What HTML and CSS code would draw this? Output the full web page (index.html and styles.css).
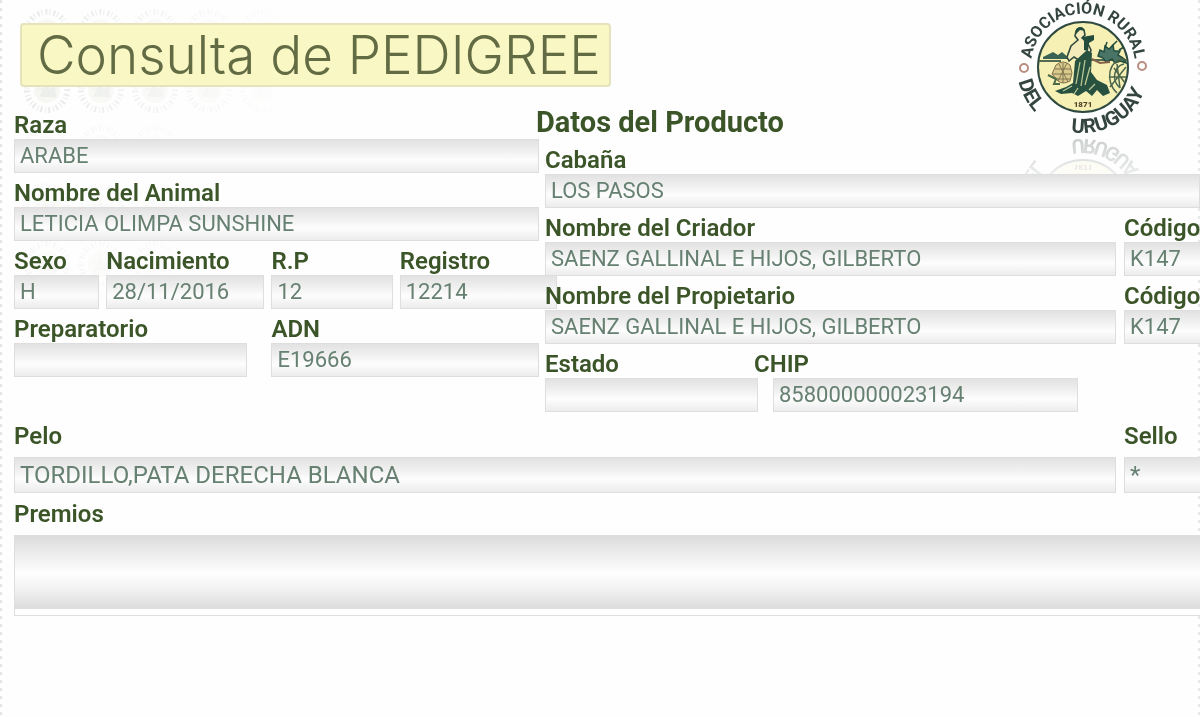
FILE: index.html
```
<!DOCTYPE html>
<html lang="es">
<head>
    <meta charset="UTF-8">
    <meta name="viewport" content="width=device-width, initial-scale=1.0">
    <title>Consulta de PEDIGREE</title>
    <link rel="stylesheet" href="styles.css">
</head>
<body>
    <svg class="watermark" viewBox="0 0 300 400" aria-hidden="true">
        <defs>
            <linearGradient id="fade">
                <stop offset="0" stop-color="#fff"/>
                <stop offset="1" stop-color="#fff" stop-opacity="0"/>
            </linearGradient>
            <mask id="fadeMask"><rect width="300" height="400" fill="url(#fade)"/></mask>
            <pattern id="seals" x="20" y="4" width="54" height="58" patternUnits="userSpaceOnUse">
                <circle cx="27" cy="28" r="20" fill="none" stroke="#cfd4cf" stroke-width="6" stroke-dasharray="1 3 2 2"/>
                <circle cx="27" cy="28" r="13" fill="#eef0e6"/>
                <path d="M20 34 l6 -12 3 6 5 -3 2 10z M17 27 h20" fill="#d5dad2" stroke="#d5dad2"/>
            </pattern>
        </defs>
        <g mask="url(#fadeMask)">
            <rect x="20" y="4" width="270" height="116" fill="url(#seals)"/>
            <rect x="20" y="120" width="162" height="174" fill="url(#seals)" opacity="0.4"/>
        </g>
    </svg>

    <header class="header">
        <h1 class="title">Consulta de PEDIGREE</h1>
        <svg class="logo" viewBox="0 0 140 174" role="img" aria-label="Asociación Rural del Uruguay">
            <defs>
                <path id="arcTop" d="M21 83 A52 52 0 1 1 119 83"/>
                <path id="arcBottom" d="M4 67 A66 66 0 0 0 136 67"/>
                <linearGradient id="reflFade" x1="0" y1="136" x2="0" y2="172" gradientUnits="userSpaceOnUse">
                    <stop offset="0" stop-color="#fff" stop-opacity="0.26"/>
                    <stop offset="1" stop-color="#fff" stop-opacity="0.1"/>
                </linearGradient>
                <mask id="reflMask"><rect y="136" width="140" height="38" fill="url(#reflFade)"/></mask>
                <g id="seal">
                    <text class="seal-top"><textPath href="#arcTop" startOffset="50%" text-anchor="middle">ASOCIACIÓN RURAL</textPath></text>
                    <text class="seal-bottom"><textPath href="#arcBottom" startOffset="7%">DEL</textPath></text>
                    <text class="seal-bottom"><textPath href="#arcBottom" startOffset="66%" text-anchor="middle">URUGUAY</textPath></text>
                    <g fill="none" stroke="#b98d80" stroke-width="2">
                        <circle cx="11" cy="68" r="4"/>
                        <circle cx="129" cy="66" r="4"/>
                    </g>
                    <circle cx="70" cy="67" r="45" fill="#f6f0b4" stroke="#2f4a40" stroke-width="2"/>
                    <path d="M26 61 H48 M78 60 H114" stroke="#536a50" stroke-width="2"/>
                    <path d="M30 57 l10 -5 5 3 4 -3 8 7 h-27z" fill="#3a6354"/>
                    <!-- seated figure -->
                    <path d="M63 31 q4 -6 8 -1 l1 5 -3 3 5 4 4 8 -3 10 -8 1 -6 -4 -5 4 -2 -4 4 -11 7 -6 -3 -4z" fill="#f3ebbb" stroke="#31493f" stroke-width="1.6"/>
                    <path d="M63 29 q6 -5 9 2 l-5 -1 -4 4z M69 37 l12 -2 0 5 -5 3 -1 8 -4 -1 0 -9z" fill="#234b3d"/>
                    <path d="M62 61 L74 50 79 53 78 72 84 80 94 85 97 93 90 96 84 90 79 96 73 91 65 96 59 93 48 94 42 91 53 87 60 83z" fill="#285140"/>
                    <path d="M67 62 L63 84 M72 60 L68 86 M77 67 L72 85 M82 84 L76 90 M59 86 L50 91 M65 88 L61 94" stroke="#b9c795" stroke-width="1.3"/>
                    <!-- basket -->
                    <path d="M43 65 q7 -6 14 0 l2 8 -2 8 q-7 4 -12 0 l-6 -7z" fill="#dacb8d" stroke="#826f4a"/>
                    <path d="M42 69 h16 M40 74 h18 M43 79 h14 M46 64 l9 18 M54 63 l-9 18 M50 63 v20" stroke="#7f7650" fill="none"/>
                    <path d="M35 75 l8 4 -2 5 6 0" stroke="#4b6847" stroke-width="2" fill="none"/>
                    <!-- bull -->
                    <path d="M85 56 l2 -6 4 2 1 -6 4 3 4 -4 1 6 6 0 -2 4 5 3 3 5 -6 -2 -5 2 -3 -4 -6 3 -3 -4z" fill="#4a7466" stroke="#234d3d" stroke-width="1.5"/>
                    <path d="M92 48 l2 -6 M99 46 l5 -5 M106 50 l5 -3" stroke="#234d3d" stroke-width="1.5"/>
                    <path d="M79 59 l8 4 10 -1" fill="none" stroke="#856348" stroke-width="2"/>
                    <!-- wheel -->
                    <g fill="none" stroke="#4d674d" stroke-width="1.5">
                        <path d="M112 59 C96 58 91 81 104 93"/>
                        <path d="M111 64 C102 66 97 79 107 88"/>
                        <path d="M97 77 h16 M101 68 l11 15 M104 64 l3 24 M97 87 l16 -20"/>
                    </g>
                    <text class="seal-year" x="70" y="107" text-anchor="middle">1871</text>
                </g>
            </defs>
            <use href="#seal"/>
            <g mask="url(#reflMask)"><use href="#seal" transform="translate(0 272) scale(1 -1)"/></g>
        </svg>
    </header>

    <form class="ficha">
        <div class="columns">
            <section class="animal">
                <div class="field full">
                    <label for="raza">Raza</label>
                    <input id="raza" type="text" value="ARABE" readonly>
                </div>
                <div class="field full">
                    <label for="nombre">Nombre del Animal</label>
                    <input id="nombre" type="text" value="LETICIA OLIMPA SUNSHINE" readonly>
                </div>
                <div class="field">
                    <label for="sexo">Sexo</label>
                    <input id="sexo" type="text" value="H" readonly>
                </div>
                <div class="field">
                    <label for="nacimiento">Nacimiento</label>
                    <input id="nacimiento" type="text" value="28/11/2016" readonly>
                </div>
                <div class="field">
                    <label for="rp">R.P</label>
                    <input id="rp" type="text" value="12" readonly>
                </div>
                <div class="field registro">
                    <label for="registro">Registro</label>
                    <input id="registro" type="text" value="12214" readonly>
                </div>
                <div class="field half preparatorio">
                    <label for="preparatorio">Preparatorio</label>
                    <input id="preparatorio" type="text" value="" readonly>
                </div>
                <div class="field half">
                    <label for="adn">ADN</label>
                    <input id="adn" type="text" value="E19666" readonly>
                </div>
            </section>

            <section class="producto">
                <h2>Datos del Producto</h2>
                <div class="field">
                    <label for="cabana">Cabaña</label>
                    <input id="cabana" type="text" value="LOS PASOS" readonly>
                </div>
                <div class="row">
                    <div class="field">
                        <label for="criador">Nombre del Criador</label>
                        <input id="criador" type="text" value="SAENZ GALLINAL E HIJOS, GILBERTO" readonly>
                    </div>
                    <div class="field codigo">
                        <label for="codCriador">Código</label>
                        <input id="codCriador" type="text" value="K147" readonly>
                    </div>
                </div>
                <div class="row">
                    <div class="field">
                        <label for="propietario">Nombre del Propietario</label>
                        <input id="propietario" type="text" value="SAENZ GALLINAL E HIJOS, GILBERTO" readonly>
                    </div>
                    <div class="field codigo">
                        <label for="codPropietario">Código</label>
                        <input id="codPropietario" type="text" value="K147" readonly>
                    </div>
                </div>
                <div class="row-chip">
                    <div class="field estado">
                        <label for="estado">Estado</label>
                        <input id="estado" type="text" value="" readonly>
                    </div>
                    <div class="field chip">
                        <label for="chip">CHIP</label>
                        <input id="chip" type="text" value="858000000023194" readonly>
                    </div>
                </div>
            </section>
        </div>

        <div class="row tall">
            <div class="field">
                <label for="pelo">Pelo</label>
                <input id="pelo" type="text" value="TORDILLO,PATA DERECHA BLANCA" readonly>
            </div>
            <div class="field codigo">
                <label for="sello">Sello</label>
                <input id="sello" type="text" value="*" readonly>
            </div>
        </div>
        <div class="field tall">
            <label for="premios">Premios</label>
            <textarea id="premios" readonly></textarea>
        </div>
    </form>
</body>
</html>
```
FILE: styles.css
```
:root {
    --label: #3b5528;
    --value: #668071;
    --border: #dedede;
    --cream: #f9f8c5;
}

* {
    margin: 0;
    padding: 0;
    box-sizing: border-box;
}

body {
    position: relative;
    min-height: 100vh;
    overflow-x: hidden;
    background-color: #fefefe;
    /* perforated edges */
    background-image:
        repeating-linear-gradient(#e4e4e4 0 3px, transparent 3px 8px),
        repeating-linear-gradient(#e8e8e8 0 3px, transparent 3px 8px);
    background-size: 2px 100%;
    background-position: left top, right top;
    background-repeat: no-repeat;
    font-family: Roboto, "Liberation Sans", sans-serif;
    color: var(--label);
}

.watermark {
    position: absolute;
    top: 0;
    left: 0;
    z-index: -1;
    width: 300px;
    height: 400px;
    opacity: 0.5;
}

/* the seal hangs below the header, over the heading row */
.header {
    display: flex;
    justify-content: space-between;
    align-items: flex-start;
    height: 105px;
    padding: 0 47px 0 20px;
}

.title {
    margin-top: 23px;
    padding: 0 8px 0 15px;
    background-color: var(--cream);
    border: 2px solid #e5e3bc;
    border-radius: 4px;
    font-family: Inter, Roboto, sans-serif;
    font-size: 53px;
    font-weight: 300;
    line-height: 60px;
    color: #626b43;
    white-space: nowrap;
}

.logo {
    flex: none;
    width: 140px;
    height: 174px;
}

.seal-top,
.seal-bottom {
    font-size: 16px;
    font-weight: 700;
    fill: #34443f;
}

.seal-bottom {
    font-size: 20px;
}

.seal-year {
    font-size: 8px;
    font-weight: 900;
    fill: #54452b;
}

.ficha {
    padding-left: 14px;
}

.columns {
    display: grid;
    grid-template-columns: 525fr 655fr;
    gap: 6px;
}

.animal {
    display: grid;
    grid-template-columns: 85fr 158fr 121fr 139fr;
    column-gap: 7px;
    align-content: start;
}

.full {
    grid-column: span 4;
}

.half {
    grid-column: span 2;
}

.preparatorio input {
    width: 93%;
}

.registro input {
    width: 113%;
}

.producto {
    position: relative;
}

h2 {
    margin-left: -9px;
    font-size: 29px;
    font-weight: 700;
    line-height: 35px;
}

.row {
    display: grid;
    grid-template-columns: minmax(0, 1fr) 76px;
    gap: 8px;
}

.row-chip {
    display: grid;
    grid-template-columns: 209fr 324fr 122fr;
}

.estado input {
    width: 102%;
}

.chip input {
    margin-left: 19px;
    width: 94%;
}

.field {
    display: flex;
    flex-direction: column;
    min-width: 0;
}

label {
    padding-top: 6px;
    font-size: 24px;
    font-weight: 600;
    line-height: 28px;
    white-space: nowrap;
}

input,
textarea {
    width: 100%;
    border: 1px solid var(--border);
    font-family: inherit;
    font-size: 22px;
    color: var(--value);
    outline: none;
}

input {
    height: 34px;
    padding: 0 5px 2px;
    background: linear-gradient(#e2e2e2, #f0f0f0 35%, #fdfdfd 62%, #ececec);
}

.codigo input {
    border-right: none;
}

.tall label {
    padding: 7px 0;
}

.ficha > .row {
    margin-top: 3px;
}

.tall input {
    height: 36px;
    padding-bottom: 0;
    font-size: 24px;
}

textarea {
    height: 81px;
    padding: 5px;
    resize: none;
    border-right: none;
    background: #fefefe linear-gradient(#dcdcdc, #f0f0f0 30%, #fefefe 52%, #f0f0f0 75%, #dcdcdc) no-repeat 0 0 / 100% 73px;
}
```
